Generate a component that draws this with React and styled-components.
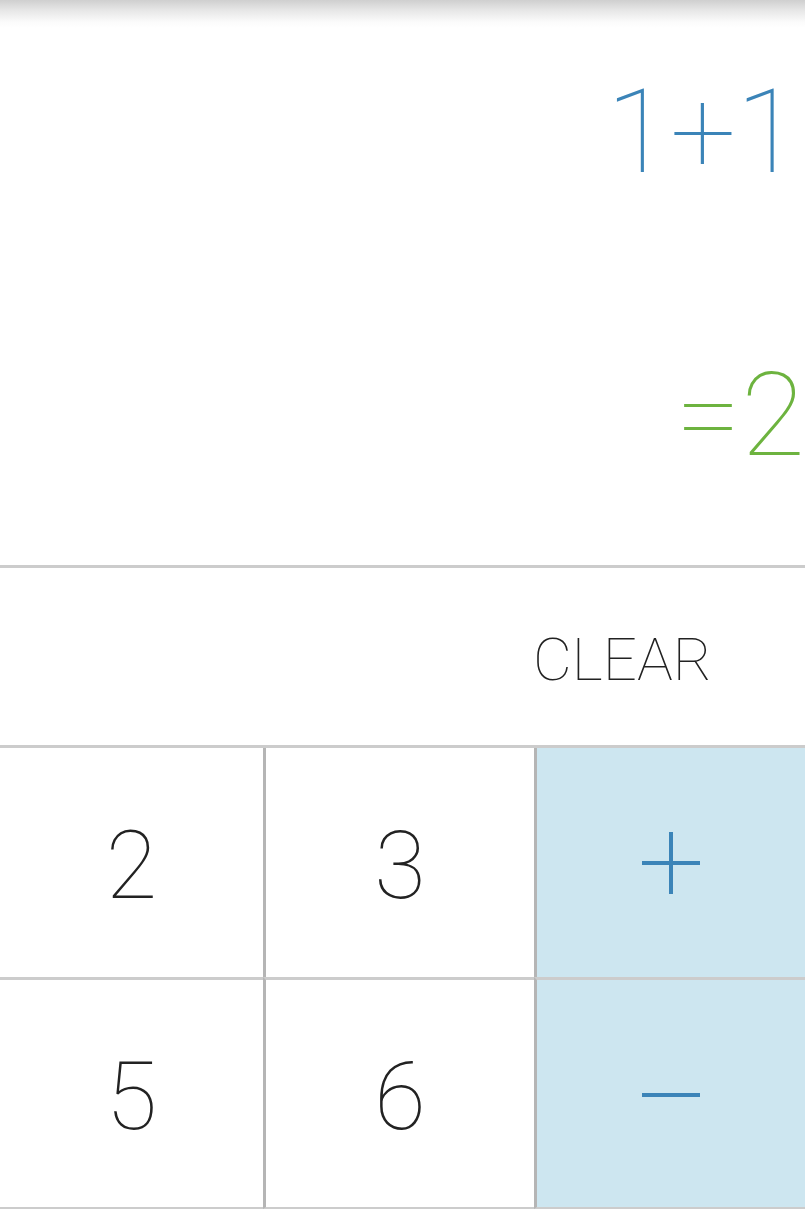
import React from 'react';
import styled, { createGlobalStyle } from 'styled-components';

const GlobalStyle = createGlobalStyle`
    html, body {
        margin: 0;
        padding: 0;
        background: #fff;
        overflow: hidden;
    }
    body {
        font-family: Roboto, "Noto Sans", sans-serif;
    }
`;

const Screen = styled.div`
    width: 805px;
    height: 1211px;
    display: flex;
    flex-direction: column;
    overflow: hidden;
    background: #fff;
`;

const Display = styled.div`
    height: 565px;
    display: flex;
    flex-direction: column;
    align-items: flex-end;
    background: linear-gradient(#cfcfcf 0px, #e6e6e6 10px, #fbfbfb 22px, #fff 28px);
    border-bottom: 3px solid #cccccc;
    box-sizing: content-box;
`;

const Line = styled.div`
    font-size: 117px;
    font-weight: 100;
    line-height: 1;
    white-space: nowrap;
    color: ${p => p.color};
    margin-top: ${p => p.top}px;
    margin-right: ${p => p.right}px;
`;

const Toolbar = styled.div`
    height: 177px;
    display: flex;
    align-items: center;
    justify-content: flex-end;
    padding-right: 93px;
    border-bottom: 3px solid #cccccc;
`;

const ClearButton = styled.div`
    font-size: 60px;
    font-weight: 100;
    color: #222;
    padding-top: 6px;
`;

const Pad = styled.div`
    display: grid;
    grid-template-columns: 263px 271px 271px;
    grid-template-rows: 229px 232px;
`;

const Key = styled.div`
    display: flex;
    align-items: center;
    justify-content: center;
    padding-top: 7px;
    background: ${p => (p.op ? '#cde6f0' : '#fff')};
    border-left: ${p => (p.first ? 'none' : '3px solid #b5b5b5')};
    border-top: ${p => (p.topRow ? 'none' : '3px solid #cccccc')};
    border-bottom: ${p => (p.topRow ? 'none' : '2px solid #cccccc')};
    color: #222;
    font-size: 94px;
    font-weight: 100;
    line-height: 1;
`;

const OpIcon = ({ minus }) => (
    <svg width="60" height="64" viewBox="0 0 60 64" style={{ marginTop: -7 }}>
        <rect x="1" y={minus ? 31 : 30} width="58" height="4" fill="#3b84b8" />
        {!minus && <rect x="28" y="1" width="4" height="62" fill="#3b84b8" />}
    </svg>
);

const App = () => (
    <>
        <GlobalStyle />
        <Screen>
            <Display>
                <Line color="#3b84b8" top={74} right={5}>1+1</Line>
                <Line color="#6db33f" top={166} right={0}>=2</Line>
            </Display>
            <Toolbar>
                <ClearButton>CLEAR</ClearButton>
            </Toolbar>
            <Pad>
                <Key first topRow>2</Key>
                <Key topRow>3</Key>
                <Key op topRow><OpIcon /></Key>
                <Key first>5</Key>
                <Key>6</Key>
                <Key op><OpIcon minus /></Key>
            </Pad>
        </Screen>
    </>
);

export default App;
